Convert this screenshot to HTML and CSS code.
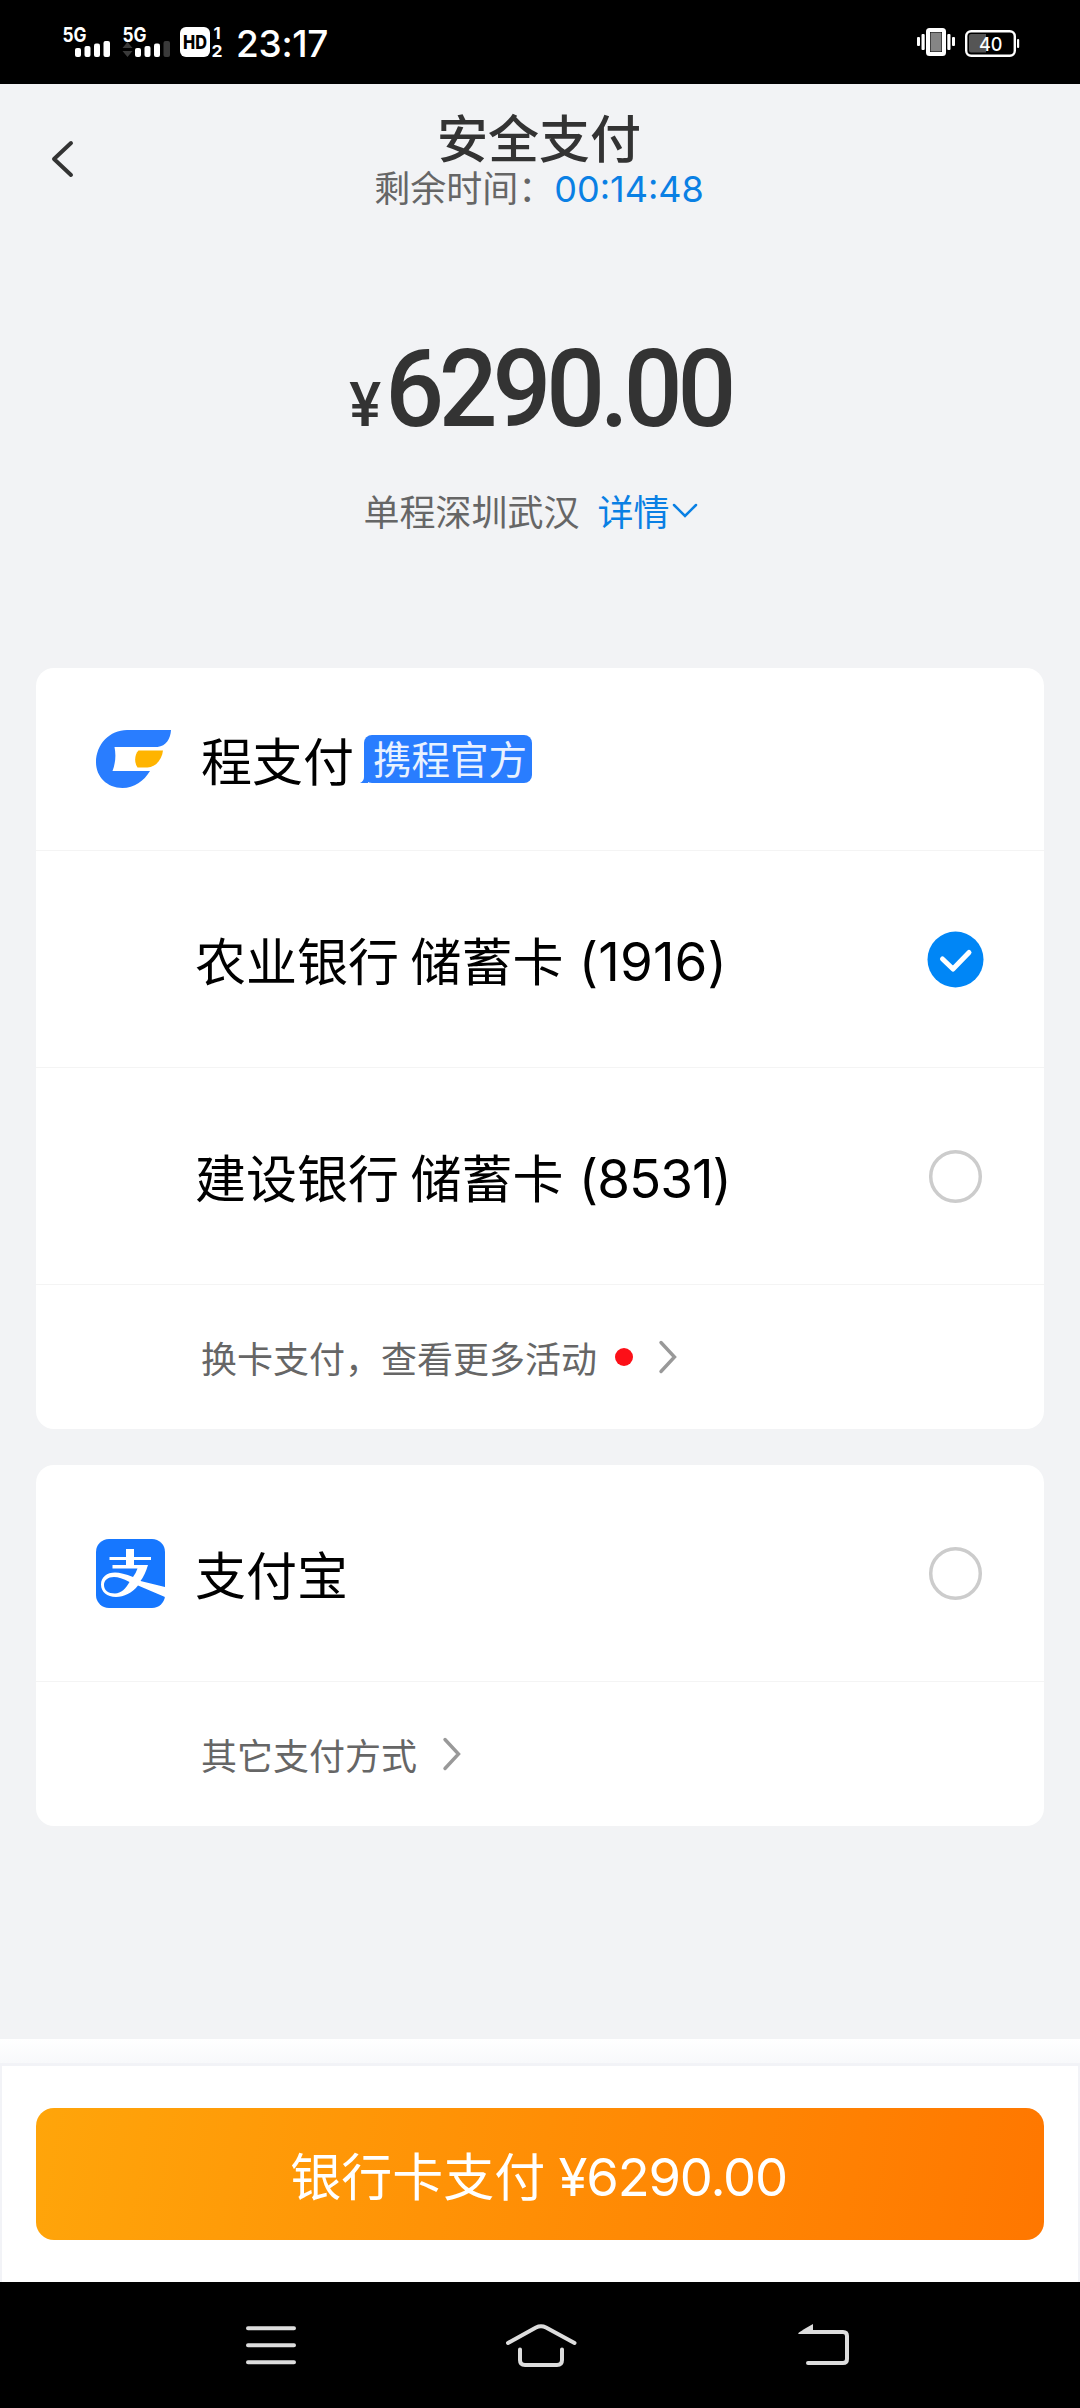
FILE: index.html
```html
<!DOCTYPE html>
<html lang="zh-CN">
<head>
<meta charset="utf-8">
<title>安全支付</title>
<link rel="stylesheet" href="styles.css">
</head>
<body>
<div class="screen">
  <div class="status">
    <div class="status-left">
      <svg width="162" height="32" viewBox="62 26 162 32">
        <g class="signal-label">
          <text x="62.500" y="42" textLength="24" lengthAdjust="spacingAndGlyphs">5G</text>
          <text x="122.500" y="42" textLength="24" lengthAdjust="spacingAndGlyphs">5G</text>
        </g>
        <g fill="#fff">
          <rect x="75" y="48" width="6" height="9" rx="2"/>
          <rect x="84.500" y="46" width="6" height="11" rx="2"/>
          <rect x="94" y="43.500" width="6" height="13.500" rx="2"/>
          <rect x="103.500" y="41" width="6.500" height="16" rx="2"/>
          <rect x="135" y="48" width="6" height="9" rx="2"/>
          <rect x="144.500" y="46" width="6" height="11" rx="2"/>
          <rect x="154" y="43.500" width="6" height="13.500" rx="2"/>
          <rect x="180" y="27" width="30" height="30" rx="6"/>
        </g>
        <g fill="#3a3a3a">
          <rect x="163.500" y="41" width="6.500" height="16" rx="2"/>
          <path d="M127.500 42l5 6h-10zM127.500 57l5-6h-10z"/>
        </g>
        <text class="hd" x="183" y="49" textLength="24" lengthAdjust="spacingAndGlyphs">HD</text>
        <text class="sim" x="213.500" y="39">1</text>
        <text class="sim" x="211.500" y="56.500" textLength="11" lengthAdjust="spacingAndGlyphs">2</text>
      </svg>
      <span class="clock">23:17</span>
    </div>
    <svg width="104" height="32" viewBox="917 26 104 32">
      <g fill="#fff">
        <rect x="918" y="37" width="3" height="9" rx="1"/>
        <rect x="922.500" y="34" width="3.200" height="16" rx="1"/>
        <rect x="948.300" y="34" width="3.200" height="16" rx="1"/>
        <rect x="953" y="37" width="3" height="9" rx="1"/>
        <rect x="1018" y="39" width="2.200" height="9" rx="1"/>
      </g>
      <rect x="929" y="30" width="16" height="24" rx="1.500" fill="#000" stroke="#fff" stroke-width="4"/>
      <rect x="931.500" y="32.500" width="11" height="19" fill="#858585"/>
      <rect x="967.200" y="31.200" width="48.600" height="24.600" rx="5" fill="none" stroke="#fff" stroke-width="2.400"/>
      <path d="M972 34h15v18.500h-15q-2 0-2-2v-14.500q0-2 2-2z" fill="#555"/>
      <text class="battery" x="980" y="51" textLength="23.500" lengthAdjust="spacingAndGlyphs">40</text>
    </svg>
  </div>

  <header class="header">
    <svg class="back" width="24" height="40" viewBox="0 0 24 40"><path d="M20 4L3 20l17 16" fill="none" stroke="#333" stroke-width="4" stroke-linecap="round" stroke-linejoin="round"/></svg>
    <div class="titles">
      <h1>安全支付</h1>
      <p class="remain">剩余时间：<span class="num timer">00:14:48</span></p>
    </div>
  </header>

  <section class="summary">
    <div class="amount"><span class="yen">¥</span><span class="sum">6290.00</span></div>
    <div class="trip">
      <span>单程深圳武汉</span>
      <span class="detail">详情<svg width="26" height="16" viewBox="0 0 26 16"><path d="M2 3l11 11L24 3" fill="none" stroke="currentColor" stroke-width="2.500" stroke-linecap="round"/></svg></span>
    </div>
  </section>

  <main class="cards">
    <section class="card">
      <div class="row head">
        <svg class="logo" width="75" height="58" viewBox="0 0 75 58">
          <path d="M31 0h44c-.5 9-5 16-13.500 17H18.500q2.500 12-2 24H54C48 51 38 58 26.500 58 11 58 0 46.500 0 32.500 0 14 14 0 31 0z" fill="#297dff"/>
          <path d="M42.500 20.500H67c-1 9-7 16.500-15.500 17H41.500c-3.500-5-3-13 1-17z" fill="#ffb400"/>
        </svg>
        <span class="name">程支付</span>
        <span class="tag"><svg class="tail" width="8" height="12" viewBox="0 0 8 12"><path d="M4 0v6q0 4-4 6h8V0z" fill="#297dff"/></svg>携程官方</span>
      </div>
      <div class="row option">
        <span class="name">农业银行 储蓄卡 <span class="num loose">(1916)</span></span>
        <svg class="radio" width="57" height="57" viewBox="0 0 57 57"><circle cx="28.500" cy="28.500" r="28" fill="#0086f6"/><path d="M15.500 28l10.500 10L42 21.500" fill="none" stroke="#fff" stroke-width="5" stroke-linecap="round" stroke-linejoin="round"/></svg>
      </div>
      <div class="row option">
        <span class="name">建设银行 储蓄卡 <span class="num">(8531)</span></span>
        <svg class="radio" width="57" height="57" viewBox="0 0 57 57"><circle cx="28.500" cy="28.500" r="24.800" fill="#fff" stroke="#ccc" stroke-width="3.500"/></svg>
      </div>
      <div class="row more">
        <span>换卡支付，查看更多活动</span>
        <i class="dot"></i>
        <svg class="chev" width="18" height="34" viewBox="0 0 18 34"><path d="M2 2.500L15.500 17 2 31.500" fill="none" stroke="#999" stroke-width="3.400" stroke-linecap="round"/></svg>
      </div>
    </section>

    <section class="card">
      <div class="row pay">
        <svg class="logo" width="69" height="69" viewBox="0 0 69 69">
          <rect width="69" height="69" rx="13" fill="#1677ff"/>
          <path d="M30 10h8v8h17v3H38v5h14q-3 10-7.500 16L69 48v10L42 46.500C36 54 28 58 20 58 11 58 5 53 5 45.500 5 38 11 33.500 19 33.500q7 0 18 4.500 3-4 4.500-8.500H16.500V26H30v-5H13.500v-3H30zM33.500 43Q24 38 18 38C12 38 8 41 8 46c0 5 4 8.500 11 8.500 6 0 11-5 14.500-11.500z" fill="#fff" fill-rule="evenodd"/>
        </svg>
        <span class="name">支付宝</span>
        <svg class="radio" width="57" height="57" viewBox="0 0 57 57"><circle cx="28.500" cy="28.500" r="24.800" fill="#fff" stroke="#ccc" stroke-width="3.500"/></svg>
      </div>
      <div class="row more other">
        <span>其它支付方式</span>
        <svg class="chev" width="18" height="34" viewBox="0 0 18 34"><path d="M2 2.500L15.500 17 2 31.500" fill="none" stroke="#999" stroke-width="3.400" stroke-linecap="round"/></svg>
      </div>
    </section>
  </main>

  <footer class="footer">
    <div class="shade"></div>
    <div class="action"><button class="submit">银行卡支付 <span class="num">¥6290.00</span></button></div>
  </footer>

  <nav class="nav">
    <svg width="52" height="44" viewBox="245 2323 52 44"><path d="M248 2328.300h46M248 2345.300h46M248 2362.300h46" stroke="#ddd" stroke-width="4" stroke-linecap="round"/></svg>
    <svg width="72" height="46" viewBox="505 2321 72 46"><path d="M508 2342l28-15.500q5-2.500 10 0l28.500 15.500M520 2348.500V2359q0 5 5 5h32q5 0 5-5v-10.500" fill="none" stroke="#ddd" stroke-width="4" stroke-linecap="round"/></svg>
    <svg width="52" height="44" viewBox="798 2322 52 44"><path d="M812 2331h31q4 0 4 4v23q0 4-4 4h-35" fill="none" stroke="#ddd" stroke-width="4" stroke-linecap="round"/><path d="M798 2332.500q0-1 15-9.500v10h-14z" fill="#ddd"/></svg>
  </nav>
</div>
</body>
</html>
```
FILE: styles.css
```css
* {
  box-sizing: border-box;
}

body {
  margin: 0;
  background: #f2f3f5;
  font-family: "Noto Sans CJK SC", sans-serif;
  color: #000;
}

svg {
  display: block;
  flex: none;
  overflow: visible;
}

.screen {
  display: flex;
  flex-direction: column;
  width: 1080px;
  height: 2408px;
}

.num {
  font-family: Inter, "Noto Sans CJK SC", sans-serif;
  line-height: 1;
}

/* status bar */
.status {
  display: flex;
  justify-content: space-between;
  height: 84px;
  padding: 26px 60px 0 62px;
  background: #000;
}

.status-left {
  display: flex;
  gap: 12px;
}

.signal-label {
  font: 700 20px Inter, sans-serif;
  fill: #fff;
}

.hd {
  font: 800 19px Inter, sans-serif;
  fill: #000;
}

.sim {
  font: 700 16.500px Inter, sans-serif;
  fill: #fff;
}

.battery {
  font: 500 19px Inter, sans-serif;
  fill: #fff;
}

.clock {
  font: 500 37px/36px Inter, sans-serif;
  letter-spacing: -0.3px;
  color: #fff;
}

/* header */
.header {
  position: relative;
  display: flex;
  justify-content: center;
  height: 236px;
  padding-top: 27px;
}

.back {
  position: absolute;
  left: 51px;
  top: 55px;
}

.titles {
  display: flex;
  flex-direction: column;
  align-items: center;
}

h1 {
  margin: 0 2px 0 0;
  font-size: 51px;
  font-weight: 500;
  line-height: 50px;
  color: #333;
}

.remain {
  margin: 0 2px 0 0;
  font-size: 36px;
  line-height: 50px;
  color: #666;
}

.timer {
  font-size: 36px;
  color: #0a80e4;
}

/* amount */
.summary {
  display: flex;
  flex-direction: column;
  align-items: center;
  height: 348px;
}

.amount {
  display: flex;
  align-items: baseline;
  height: 150px;
  font-family: Roboto, sans-serif;
  font-weight: 500;
  line-height: 140px;
  color: #333;
  transform: scaleX(0.968);
}

.yen {
  width: 37px;
  font-size: 62px;
  letter-spacing: -4px;
}

.sum {
  font-size: 107px;
  letter-spacing: -5.300px;
}

.trip {
  display: flex;
  gap: 18px;
  margin-right: 19px;
  padding-top: 14px;
  font-size: 36px;
  line-height: 52px;
  color: #666;
}

.detail {
  display: flex;
  align-items: center;
  gap: 2px;
  color: #0a80e4;
}

/* cards */
.cards {
  display: flex;
  flex-direction: column;
  gap: 36px;
  height: 1371px;
  padding: 0 36px;
}

.card {
  border-radius: 18px;
  background: #fff;
}

.row {
  display: flex;
  align-items: center;
  border-top: 1px solid #f4f4f4;
}

.row:first-child {
  border-top: 0;
}

.name {
  font-size: 51px;
  line-height: 72px;
}

.name .num {
  margin-left: 4px;
  font-size: 53px;
  letter-spacing: -1px;
}

.name .loose {
  letter-spacing: 0.1px;
}

.head {
  height: 182px;
  padding-left: 60px;
}

.head .name {
  margin-left: 30px;
}

.tag {
  position: relative;
  width: 168px;
  height: 48px;
  margin-left: 10px;
  padding-left: 4px;
  border-radius: 8px;
  background: #297dff;
  font-size: 38.500px;
  font-weight: 400;
  line-height: 44px;
  text-align: center;
  color: #e9f2ff;
}

.tail {
  position: absolute;
  left: -4px;
  bottom: 0;
}

.option {
  justify-content: space-between;
  height: 217px;
  padding: 0 60px 0 159px;
}

.more {
  height: 145px;
  padding-left: 165px;
  font-size: 36px;
  line-height: 52px;
  color: #666;
}

.dot {
  width: 18px;
  height: 18px;
  margin-left: 18px;
  border-radius: 50%;
  background: #fc1018;
}

.more .chev {
  margin-left: 26px;
}

.pay {
  height: 216px;
  padding: 0 60px;
}

.pay .name {
  flex: 1;
  margin-left: 30px;
}

/* footer */
.footer {
  height: 243px;
  background: #fff;
}

.shade {
  height: 24px;
  background: linear-gradient(#fff, #f8f9fb);
}

.action {
  height: 219px;
  padding: 42px 34px 0;
  border: solid #f2f3f7;
  border-width: 3px 2px 0;
}

.submit {
  display: block;
  width: 100%;
  height: 132px;
  padding: 0 3px 0 0;
  border: 0;
  border-radius: 18px;
  background: linear-gradient(100deg, #ffa50a, #ff7700);
  font: 400 51px/72px "Noto Sans CJK SC", sans-serif;
  color: #fff;
}

.submit .num {
  margin-left: 2px;
  font-size: 52.500px;
  letter-spacing: -1.200px;
}

/* system navigation */
.nav {
  display: grid;
  grid-template-columns: 52px 72px 52px;
  column-gap: 208px;
  align-items: center;
  height: 126px;
  padding-left: 245px;
  background: #000;
}

.nav svg:last-child {
  margin-left: 13px;
}
```
